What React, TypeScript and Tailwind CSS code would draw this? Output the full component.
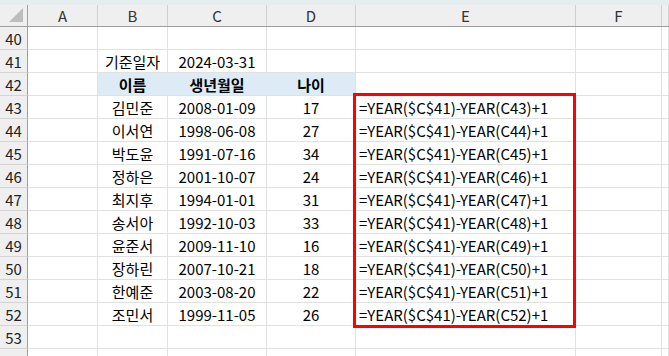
import React from "react";

const cols = ["A", "B", "C", "D", "E", "F", ""];
const widths = ["w-[70px]", "w-[70px]", "w-[99px]", "w-[89px]", "w-[220px]", "w-[86px]", "flex-1"];

type Person = { name: string; birth: string; age: number };

const people: Person[] = [
  { name: "김민준", birth: "2008-01-09", age: 17 },
  { name: "이서연", birth: "1998-06-08", age: 27 },
  { name: "박도윤", birth: "1991-07-16", age: 34 },
  { name: "정하은", birth: "2001-10-07", age: 24 },
  { name: "최지후", birth: "1994-01-01", age: 31 },
  { name: "송서아", birth: "1992-10-03", age: 33 },
  { name: "윤준서", birth: "2009-11-10", age: 16 },
  { name: "장하린", birth: "2007-10-21", age: 18 },
  { name: "한예준", birth: "2003-08-20", age: 22 },
  { name: "조민서", birth: "1999-11-05", age: 26 },
];

type Cell = { text?: string; align?: "center" | "left"; bold?: boolean; fill?: boolean };

function rowCells(row: number): Cell[] {
  const blank: Cell[] = cols.map(() => ({}));
  if (row === 41) {
    blank[1] = { text: "기준일자", align: "center" };
    blank[2] = { text: "2024-03-31", align: "center" };
  }
  if (row === 42) {
    blank[1] = { text: "이름", align: "center", bold: true, fill: true };
    blank[2] = { text: "생년월일", align: "center", bold: true, fill: true };
    blank[3] = { text: "나이", align: "center", bold: true, fill: true };
  }
  const p = people[row - 43];
  if (p) {
    blank[1] = { text: p.name, align: "center" };
    blank[2] = { text: p.birth, align: "center" };
    blank[3] = { text: String(p.age), align: "center" };
    blank[4] = { text: `=YEAR($C$41)-YEAR(C${row})+1`, align: "left" };
  }
  return blank;
}

function Row({ row }: { row: number }) {
  const cells = rowCells(row);
  return (
    <div className="flex h-[23px] shrink-0">
      <div className="w-[28px] shrink-0 flex items-center justify-center bg-[#efefef] border-r border-r-[#a0a0a0] border-b border-b-[#d4d4d4] text-[15px] text-[#222] leading-none">
        {row}
      </div>
      {cells.map((c, i) => {
        // filled header cells hide the grid line to their right, except the last one
        const hideRight = c.fill && i < 3;
        return (
          <div
            key={i}
            className={`${widths[i]} shrink-0 flex items-center overflow-visible whitespace-nowrap text-[15px] leading-none text-black border-b border-b-[#e1e1e1] ${
              hideRight ? "border-r border-r-[#ddebf7]" : "border-r border-r-[#e1e1e1]"
            } ${c.fill ? "bg-[#ddebf7]" : "bg-white"} ${
              c.align === "left" ? "justify-start pl-[3px]" : "justify-center"
            } ${c.bold ? "font-bold" : "font-normal"}`}
          >
            {c.text}
          </div>
        );
      })}
    </div>
  );
}

export default function App() {
  const rows = Array.from({ length: 15 }, (_, i) => 40 + i);

  return (
    <div
      className="relative w-[669px] h-[356px] overflow-hidden bg-white"
      style={{ fontFamily: '"Noto Sans CJK KR", "Noto Sans", sans-serif' }}
    >
      <div className="h-[5px] bg-[#e6edef]" />
      <div className="flex h-[22px] bg-[#efefef] border-b border-b-[#9e9e9e]">
        <div className="w-[28px] shrink-0 relative border-r border-r-[#a0a0a0]">
          <div className="absolute right-[4px] bottom-[4px] w-0 h-0 border-l-[14px] border-l-transparent border-b-[14px] border-b-[#bdbdbd]" />
        </div>
        {cols.map((c, i) => (
          <div
            key={i}
            className={`${widths[i]} shrink-0 flex items-center justify-center border-r border-r-[#d0d0d0] text-[15px] text-[#333] leading-none`}
          >
            {c}
          </div>
        ))}
      </div>
      {rows.map((r) => (
        <Row key={r} row={r} />
      ))}

      {/* selection outline around E43:E52 */}
      <div className="absolute left-[353px] top-[93px] w-[223px] h-[235px] border-[3px] border-[#ff0000] pointer-events-none" />
    </div>
  );
}
